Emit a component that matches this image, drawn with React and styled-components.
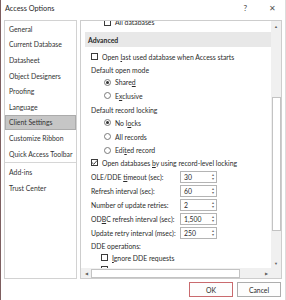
import React from 'react';
import styled, { createGlobalStyle } from 'styled-components';

const Global = createGlobalStyle`
  html, body {
    margin: 0;
    padding: 0;
    background: #ffffff;
  }
  body {
    font-family: Lato, 'Noto Sans', sans-serif;
    font-size: 6.85px;
    color: #2b2b2b;
  }
`;

const navItems = [
  'General',
  'Current Database',
  'Datasheet',
  'Object Designers',
  'Proofing',
  'Language',
  'Client Settings',
  'Customize Ribbon',
  'Quick Access Toolbar',
  '---',
  'Add-ins',
  'Trust Center',
];

const Box = ({ checked }) => (
  <CheckBox>
    {checked && (
      <svg width="7" height="7" viewBox="0 0 7 7">
        <path d="M1 3.6 L2.8 5.3 L6 1.5" fill="none" stroke="#333" strokeWidth="0.9" />
      </svg>
    )}
  </CheckBox>
);

const Spin = ({ value }) => (
  <SpinBox>
    <span>{value}</span>
    <SpinArrows>
      <i>▴</i>
      <i>▾</i>
    </SpinArrows>
  </SpinBox>
);

const App = () => {
  return (
    <>
      <Global />
      <Dialog>
        <TitleBar>
          <Title>Access Options</Title>
          <TitleButtons>
            <span>?</span>
            <Close>✕</Close>
          </TitleButtons>
        </TitleBar>

        <Body>
          <Nav>
            {navItems.map((item, i) =>
              item === '---' ? (
                <NavSeparator key={i} />
              ) : (
                <NavItem key={i} selected={item === 'Client Settings'}>
                  {item}
                </NavItem>
              )
            )}
          </Nav>

          <Panel>
            <ScrollArea>
              <Content>
                <Row h={12} indent={23}>
                  <Box />
                  <span>All databases</span>
                </Row>
                <SectionHeader>Advanced</SectionHeader>
                <Row h={13} indent={10}>
                  <Box />
                  <span>
                    Open <u>l</u>ast used database when Access starts
                  </span>
                </Row>
                <Row h={13} indent={10}>
                  Default open mode
                </Row>
                <Row h={12} indent={23}>
                  <Radio selected />
                  <span>
                    Share<u>d</u>
                  </span>
                </Row>
                <Row h={15} indent={23}>
                  <Radio />
                  <span>
                    E<u>x</u>clusive
                  </span>
                </Row>
                <Row h={13} indent={10}>
                  Default record locking
                </Row>
                <Row h={13} indent={23}>
                  <Radio selected />
                  <span>
                    No l<u>o</u>cks
                  </span>
                </Row>
                <Row h={15} indent={23}>
                  <Radio />
                  <span>All records</span>
                </Row>
                <Row h={12} indent={23}>
                  <Radio />
                  <span>
                    Edi<u>t</u>ed record
                  </span>
                </Row>
                <Row h={13} indent={10}>
                  <Box checked />
                  <span>
                    Open databases <u>b</u>y using record-level locking
                  </span>
                </Row>
                <FieldRow h={15}>
                  <span>
                    OLE/DDE <u>t</u>imeout (sec):
                  </span>
                  <Spin value="30" />
                </FieldRow>
                <FieldRow h={14}>
                  <span>Refresh interval (sec):</span>
                  <Spin value="60" />
                </FieldRow>
                <FieldRow h={14}>
                  <span>Number of update retries:</span>
                  <Spin value="2" />
                </FieldRow>
                <FieldRow h={14}>
                  <span>
                    OD<u>B</u>C refresh interval (sec):
                  </span>
                  <Spin value="1,500" />
                </FieldRow>
                <FieldRow h={13}>
                  <span>Update retry interval (msec):</span>
                  <Spin value="250" />
                </FieldRow>
                <Row h={13} indent={10}>
                  DDE operations:
                </Row>
                <Row h={11} indent={20}>
                  <Box />
                  <span>
                    <u>I</u>gnore DDE requests
                  </span>
                </Row>
                <Row h={12} indent={20}>
                  <Box />
                </Row>
              </Content>
            </ScrollArea>

            <VScroll>
              <ArrowButton>▲</ArrowButton>
              <VTrack>
                <VThumb style={{ marginTop: 66, height: 134 }} />
              </VTrack>
              <ArrowButton>▼</ArrowButton>
            </VScroll>

            <HScroll>
              <ArrowButton>◀</ArrowButton>
              <HTrack>
                <HThumb style={{ width: 149 }} />
              </HTrack>
              <ArrowButton>▶</ArrowButton>
            </HScroll>
            <Corner />
          </Panel>
        </Body>

        <Footer>
          <Button focused>OK</Button>
          <Button>Cancel</Button>
        </Footer>
      </Dialog>
    </>
  );
};

const Dialog = styled.div`
  width: 286px;
  height: 300px;
  box-sizing: border-box;
  border-left: 1px solid #7d5f60;
  border-right: 1px solid #dcdcdc;
  background: #ffffff;
  display: flex;
  flex-direction: column;
  overflow: hidden;
`;

const TitleBar = styled.div`
  height: 20px;
  display: flex;
  align-items: center;
  justify-content: space-between;
  padding: 0 9px 4px 4px;
  box-sizing: border-box;
`;

const Title = styled.div`
  font-size: 7.3px;
  color: #1f1f1f;
`;

const TitleButtons = styled.div`
  display: flex;
  align-items: center;
  gap: 22px;
  font-size: 8px;
  color: #444;
`;

const Close = styled.span`
  font-size: 8px;
  color: #555;
`;

const Body = styled.div`
  display: flex;
  gap: 3px;
  padding: 0 3px 0 3px;
  height: 259px;
`;

const Nav = styled.div`
  width: 74px;
  box-sizing: border-box;
  border: 1px solid #d2d2d2;
  display: flex;
  flex-direction: column;
`;

const NavItem = styled.div`
  height: 15.6px;
  flex-shrink: 0;
  display: flex;
  align-items: center;
  padding-left: 4px;
  box-sizing: border-box;
  white-space: nowrap;
  color: #333;
  background: ${(p) => (p.selected ? '#c6c6c6' : 'transparent')};
  outline: ${(p) => (p.selected ? '1px solid #ababab' : 'none')};
  outline-offset: -1px;
`;

const NavSeparator = styled.div`
  height: 3px;
  flex-shrink: 0;
  display: flex;
  align-items: center;

  &::after {
    content: '';
    display: block;
    width: 100%;
    height: 1px;
    background: #d6d6d6;
  }
`;

const Panel = styled.div`
  width: 202px;
  box-sizing: border-box;
  border: 1px solid #cdcdcd;
  display: grid;
  grid-template-columns: 190px 10px;
  grid-template-rows: 1fr 10px;
`;

const ScrollArea = styled.div`
  overflow: hidden;
`;

const Content = styled.div`
  margin-top: -5px;
  display: flex;
  flex-direction: column;
  white-space: nowrap;
`;

const Row = styled.div`
  height: ${(p) => p.h}px;
  display: flex;
  align-items: center;
  gap: 4px;
  padding-left: ${(p) => p.indent}px;
  flex-shrink: 0;
  color: #2b2b2b;

  u {
    text-decoration-thickness: 0.5px;
  }
`;

const FieldRow = styled(Row)`
  padding-left: 10px;
  gap: 0;

  > span:first-child {
    width: 89px;
  }
`;

const SectionHeader = styled.div`
  margin: 4px 0 3px 4px;
  height: 15px;
  background: #e8e8e8;
  display: flex;
  align-items: center;
  padding-left: 3px;
  font-weight: 700;
  color: #2a2a2a;
  flex-shrink: 0;
`;

const CheckBox = styled.span`
  width: 7px;
  height: 7px;
  box-sizing: border-box;
  border: 1px solid #3c3c3c;
  background: #fff;
  display: flex;
  align-items: center;
  justify-content: center;
  flex-shrink: 0;

  svg {
    margin: -1px;
  }
`;

const Radio = styled.span`
  width: 7px;
  height: 7px;
  box-sizing: border-box;
  border: 1px solid #7a7a7a;
  border-radius: 50%;
  background: #fff;
  flex-shrink: 0;
  display: flex;
  align-items: center;
  justify-content: center;

  &::after {
    content: '';
    width: 3px;
    height: 3px;
    border-radius: 50%;
    background: ${(p) => (p.selected ? '#333' : 'transparent')};
  }
`;

const SpinBox = styled.div`
  width: 37px;
  height: 12px;
  box-sizing: border-box;
  border: 1px solid #b4b4b4;
  display: flex;
  align-items: center;
  justify-content: space-between;
  padding: 0 2px 0 3px;
  background: #fff;
`;

const SpinArrows = styled.div`
  display: flex;
  flex-direction: column;
  justify-content: center;

  i {
    font-style: normal;
    font-size: 4px;
    line-height: 4px;
    color: #6a6a6a;
  }
`;

const VScroll = styled.div`
  display: flex;
  flex-direction: column;
  background: #f0f0f0;
`;

const ArrowButton = styled.div`
  width: 10px;
  height: 10px;
  flex-shrink: 0;
  display: flex;
  align-items: center;
  justify-content: center;
  font-size: 4px;
  color: #606060;
`;

const VTrack = styled.div`
  flex: 1;
  display: flex;
  flex-direction: column;
  align-items: center;
`;

const VThumb = styled.div`
  width: 9px;
  box-sizing: border-box;
  border: 1px solid #c3c3c3;
  background: #ffffff;
`;

const HScroll = styled.div`
  display: flex;
  background: #f0f0f0;
`;

const HTrack = styled.div`
  flex: 1;
  display: flex;
  align-items: center;
`;

const HThumb = styled.div`
  height: 9px;
  box-sizing: border-box;
  border: 1px solid #c3c3c3;
  background: #ffffff;
`;

const Corner = styled.div`
  background: #f0f0f0;
`;

const Footer = styled.div`
  flex: 1;
  display: flex;
  justify-content: flex-end;
  align-items: flex-start;
  gap: 4px;
  padding: 3px 4px 0 0;
`;

const Button = styled.div`
  width: 44px;
  height: 15px;
  box-sizing: border-box;
  border: 1px solid ${(p) => (p.focused ? '#c96a6e' : '#adadad')};
  background: #fdfdfd;
  display: flex;
  align-items: center;
  justify-content: center;
  color: #2b2b2b;
`;

export default App;
